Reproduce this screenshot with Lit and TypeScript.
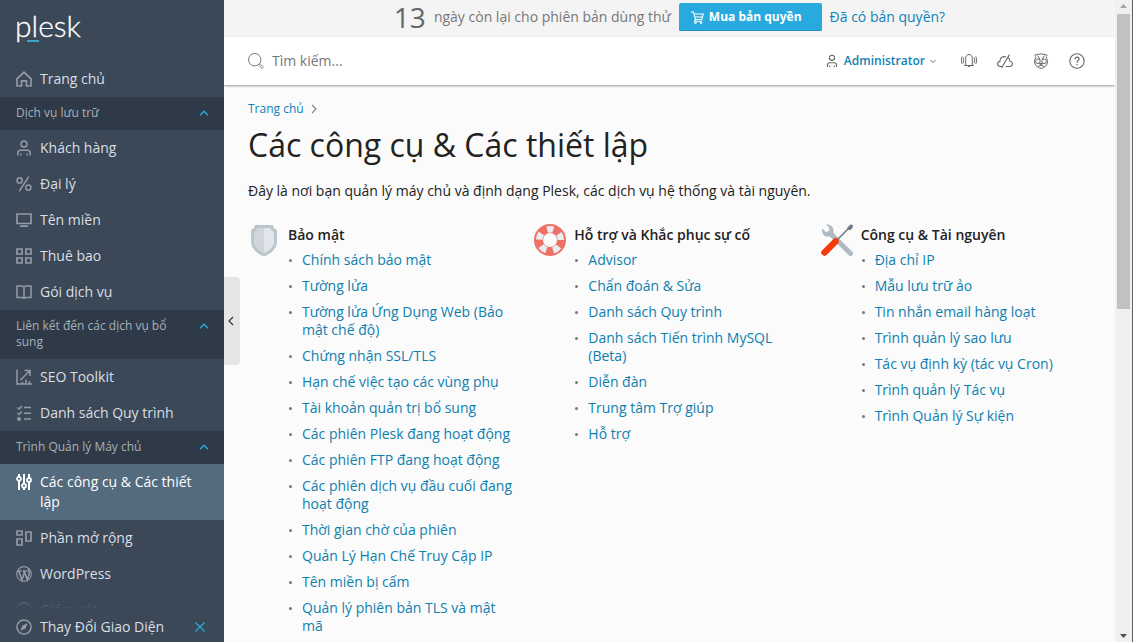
import { LitElement, html, css, svg, nothing } from "lit";
import type { TemplateResult } from "lit";
import { customElement, property } from "lit/decorators.js";
import { classMap } from "lit/directives/class-map.js";

interface NavItem { label: string; icon: string; active?: boolean; }
interface NavGroup { title?: string; items: NavItem[]; }
interface Section { title: string; icon: string; links: string[]; }

const icons: Record<string, TemplateResult> = {
  home: svg`<path d="M1 7.8 8 1.2l7 6.6V15h-4.5V9.8h-5V15H1z" stroke-width="1.7"/>`,
  user: svg`<circle cx="8" cy="4" r="3"/><path d="M1.8 15.5v-2.3c0-1.8 1.2-2.9 2.9-2.9h6.6c1.7 0 2.9 1.1 2.9 2.9v2.3"/><path d="M4.7 15.5v-2M11.3 15.5v-2"/>`,
  percent: svg`<circle cx="3.6" cy="4.4" r="2.6"/><circle cx="12.4" cy="11.6" r="2.6"/><path d="M12.8.6 3.2 15.4"/>`,
  screen: svg`<path d="M1 2h14v9.5H1zM4 14.2h8" stroke-width="1.7"/>`,
  grid: svg`<path d="M1 1h5v5H1zM10 1h5v5h-5zM1 10h5v5H1zM10 10h5v5h-5z" stroke-width="1.7"/>`,
  book: svg`<path d="M1 2h5.6L8 3l1.400-1H15v11.500H9.400L8 14.500l-1.400-1H1zM8 3v12"/>`,
  seo: svg`<path d="M1 .5V15h15M4.500 11l9-9M8.500 1.500H14V7M6.500 15v-2M10 15v-4.500M13.500 15v-3"/>`,
  tasks: svg`<path d="M1.500 2.500 3 4l3-3M1.500 8 3 9.500l3-3M8 2.500h7M8 8.200h7M8 14h7"/><circle cx="3" cy="14" r="2" fill="currentColor" stroke="none"/>`,
  tools: svg`<path d="M3 7v9M3 0v3M8 0v9.500M8 14v2M13 0v4M13 8v8" stroke-width="2"/><circle cx="3" cy="4.800" r="2" stroke-width="1.800"/><circle cx="8" cy="11.800" r="2" stroke-width="1.800"/><circle cx="13" cy="6" r="2" stroke-width="1.800"/>`,
  extensions: svg`<path d="M1 1h5v4H1zM1 9h5v6H1zM10 2h5v9h-5z" stroke-width="1.700"/>`,
  wordpress: svg`<circle cx="8" cy="8" r="7.300" stroke-width="1.200"/><path d="M1.500 5h4M6.800 5h4M2.700 5l3.200 8.800L8.300 7 7.600 5M8.200 5l3 8.800 1.900-5.600c.5-1.800-.4-2.700-.7-3.400-.4-.8.100-1.700.9-1.800" stroke-width="1.600"/>`,
  monitor: svg`<circle cx="8" cy="8" r="7"/><path d="M8 8V4"/>`,
  compass: svg`<circle cx="8" cy="8" r="7.100"/><path d="M11.700 4.300 9.500 9.500 4.300 11.700 6.500 6.500z" fill="currentColor" stroke="none"/>`,
  up: svg`<path d="M4 10.200 8 6.200l4 4" stroke-width="1.300"/>`,
  down: svg`<path d="M5.500 7 8 9.500 10.500 7" stroke-width="1"/>`,
  left: svg`<path d="M9 4 5 8l4 4" stroke-width="1.200"/>`,
  right: svg`<path d="M6 4l4 4-4 4" stroke-width="1.200"/>`,
  close: svg`<path d="m3.500 3.500 9 9M12.500 3.500l-9 9" stroke-width="1.200"/>`,
  search: svg`<circle cx="6.700" cy="6.700" r="6.200" stroke-width="1"/><path d="m11 11 1-.4 3.500 3.600-1.300 1.300-3.600-3.500z" stroke-width=".9"/>`,
  account: svg`<circle cx="8" cy="4.800" r="2.600" stroke-width="1.100"/><path d="M3.500 14v-1.800c0-1.500 1-2.400 2.400-2.400h4.200c1.400 0 2.400.9 2.400 2.400V14M5.800 14v-1.500M10.200 14v-1.500" stroke-width="1.100"/>`,
  cart: svg`<path d="M2 3h2.500l2 7.500h6.200L14.300 5H5M5.800 8h7.500M6.500 10.500l-1 1.800h7.700" stroke-width="1.100"/><circle cx="6.500" cy="13.800" r=".9" stroke-width="1"/><circle cx="12" cy="13.800" r=".9" stroke-width="1"/>`,
  bell: svg`<path d="M3.300 12.500h9.400M4.700 12.300V5.500C4.700 3 6 1.500 8 1.500s3.300 1.500 3.300 4v6.800M6.800 12.800c.2 1.200 2.200 1.200 2.400 0M2.800 4.500c-.6 1.500-.6 4 0 5.500M13.200 4.500c.6 1.500.6 4 0 5.500M1.200 3.500c-1 2-1 5.500 0 7.500M14.800 3.500c1 2 1 5.500 0 7.500" stroke-width="1"/>`,
  cloud: svg`<path d="M8.500 13.500H13c3.300-.4 3.300-5 0-5.300-.2-2-1-3.400-2.700-4M4.800 13.500H3.500C-.4 13.200-.2 8.800 3 8.300c-.2-3.600 3.400-5.600 6-4.200M12.500 1.500l-8 13.500" stroke-width="1.100"/>`,
  mascot: svg`<path d="M3 3.500C1 2.500 2 .8 4 1.800M13 3.500c2-1 1-2.700-1-1.700M4 1.800c2.500-1.200 5.500-1.200 8 0M3 4c-2 3-2.200 6.500.5 9M13 4c2 3 2.200 6.500-.5 9M3.500 13c2 3 7 3 9 0M4.500 2.500l2.500 4M11.500 2.500l-2.500 4M6.500 10.500h3L8 12.300zM5 13.500 8 12l3 1.500" stroke-width="1"/><circle cx="4.900" cy="8.300" r="2.300" stroke-width="1"/><circle cx="11.100" cy="8.300" r="2.300" stroke-width="1"/>`,
  help: svg`<circle cx="8" cy="8" r="7.200" stroke-width="1.100"/><path d="M6 6.300c0-2.900 4.100-2.700 4.100-.2C10.100 7.800 8 7.800 8 9.700M8 11v1.200" stroke-width="1.200"/>`,
};

const pictures: Record<string, TemplateResult> = {
  shield: svg`<path d="M7 1h18c.4 2.800 1.800 4.300 4 4.800V17c0 7.500-5 12-13 15.500C8 29 3 24.500 3 17V5.800C5.200 5.300 6.600 3.800 7 1z" fill="#bdc6ca"/><path d="M16 4h-6.500C9 6.300 7.800 7.600 6 8.200V17c0 5.500 3.600 9 10 12.200z" fill="#d0d7dc"/><path d="M16 4h6.500c.5 2.300 1.700 3.600 3.500 4.200V17c0 5.500-3.600 9-10 12.200z" fill="#e2e6ea"/>`,
  lifebuoy: svg`<circle cx="16" cy="16" r="11.500" fill="none" stroke="#ee7168" stroke-width="9"/><circle cx="16" cy="16" r="10.800" fill="none" stroke="#e9edef" stroke-width="6.600" stroke-dasharray="6.600 6.972" stroke-dashoffset="3.300" transform="rotate(-90 16 16)"/>`,
  tools: svg`<path d="m11 11 18.500 18.500" stroke="#b0bac0" stroke-width="5" stroke-linecap="round" fill="none"/><path d="M1 4.500 5 8l3-1 .500-3L5 .5C9 0 13 2.500 12.500 7.500L13 13l-5-.5C3.500 13.500 0 9 1 4.500z" fill="#b0bac0"/><path d="M15 17 28 4" stroke="#6d7c84" stroke-width="1.600"/><path d="m26 4 3.500-3.500 2.500.5-.5 3L28.500 6.500z" fill="#6d7c84"/><path d="m3.500 28.500 11-11" stroke="#f43b0c" stroke-width="6.500" stroke-linecap="round"/>`,
};

const icon = (name: string) => html`<svg class="icon" viewBox="0 0 16 16" fill="none" stroke="currentColor" stroke-width="1.500" aria-hidden="true">${icons[name]}</svg>`;

const iconStyles = css`
  * { box-sizing: border-box; }
  .icon { display: block; flex: none; width: 16px; height: 16px; }
  a { color: inherit; text-decoration: none; }
  button { border: 0; padding: 0; margin: 0; background: none; color: inherit; font: inherit; cursor: pointer; }
`;

@customElement("side-nav")
class SideNav extends LitElement {
  @property({ attribute: false }) groups: NavGroup[] = [];

  static styles = [iconStyles, css`
    :host { display: flex; flex-direction: column; height: 100%; background: #3a4858; color: #dbdfe3; font-size: 14px; line-height: 20px; }
    .brand { flex: none; height: 61px; padding: 7px 15px; color: #fff; font: 400 30px/36px Lato, sans-serif; font-weight: 300; -webkit-text-stroke: 0.3px #fff; }
    .name { position: relative; display: inline-block; }
    .name::after { content: ""; position: absolute; left: 12px; top: 33px; width: 12px; height: 2px; background: #3aa5c4; }
    .scroll { position: relative; flex: 1; min-height: 0; overflow: hidden; }
    .fade { position: absolute; inset: auto 0 0; height: 20px; background: linear-gradient(#3a485800, #3a4858); }
    .title { display: flex; width: 100%; justify-content: space-between; gap: 24px; padding: 8px 12px 9px 16px; background: #2e3a47; color: #a9b0b7; font-size: 12px; line-height: 16px; text-align: left; }
    .title .icon { color: #28aade; }
    .list { list-style: none; margin: 0; padding: 0; }
    .item { display: flex; gap: 8px; padding: 8px 16px; }
    .item .icon { margin-top: 2px; color: #929ba6; }
    .active { background: #546a7d; color: #fff; }
    .active .icon { color: #fff; }
    .foot { display: flex; flex: none; height: 33px; white-space: nowrap; }
    .foot .item { flex: 1; padding-right: 0; }
    .close { width: 32px; margin-right: 8px; padding: 2px 8px 0; color: #28aade; }
  `];

  render() {
    return html`
      <div class="brand"><a class="name" href="#">plesk</a></div>
      <nav class="scroll">
        ${this.groups.map((g) => html`
          ${g.title ? html`<button class="title"><span>${g.title}</span>${icon("up")}</button>` : nothing}
          <ul class="list">
            ${g.items.map((i) => html`<li><a href="#" class=${classMap({ item: true, active: !!i.active })}>${icon(i.icon)}<span>${i.label}</span></a></li>`)}
          </ul>`)}
        <div class="fade"></div>
      </nav>
      <div class="foot">
        <a class="item" href="#">${icon("compass")}<span>Thay Đổi Giao Diện</span></a>
        <button class="close" aria-label="Đóng">${icon("close")}</button>
      </div>`;
  }
}

@customElement("tool-section")
class ToolSection extends LitElement {
  @property({ attribute: false }) section!: Section;

  static styles = [iconStyles, css`
    :host { display: flex; gap: 8px; line-height: 18px; }
    .picture { flex: none; width: 32px; height: 32px; }
    .heading { margin: 2px 0 7px; font-size: 14px; font-weight: 600; color: #222; }
    .links { display: grid; gap: 8px; list-style: none; margin: 0; padding: 0; }
    .link { display: flex; color: #0f7fae; }
    .link::before { content: ""; flex: none; width: 3px; height: 3px; margin: 8px 10px 0 1px; border-radius: 50%; background: #777; }
  `];

  render() {
    return html`
      <svg class="picture" viewBox="0 0 32 32" aria-hidden="true">${pictures[this.section.icon]}</svg>
      <div>
        <h2 class="heading">${this.section.title}</h2>
        <ul class="links">${this.section.links.map((l) => html`<li class="link"><a href="#">${l}</a></li>`)}</ul>
      </div>`;
  }
}

@customElement("app-root")
class AppRoot extends LitElement {
  private groups: NavGroup[] = [
    { items: [{ label: "Trang chủ", icon: "home" }] },
    { title: "Dịch vụ lưu trữ", items: [
      { label: "Khách hàng", icon: "user" },
      { label: "Đại lý", icon: "percent" },
      { label: "Tên miền", icon: "screen" },
      { label: "Thuê bao", icon: "grid" },
      { label: "Gói dịch vụ", icon: "book" },
    ] },
    { title: "Liên kết đến các dịch vụ bổ sung", items: [
      { label: "SEO Toolkit", icon: "seo" },
      { label: "Danh sách Quy trình", icon: "tasks" },
    ] },
    { title: "Trình Quản lý Máy chủ", items: [
      { label: "Các công cụ & Các thiết lập", icon: "tools", active: true },
      { label: "Phần mở rộng", icon: "extensions" },
      { label: "WordPress", icon: "wordpress" },
      { label: "Giám sát", icon: "monitor" },
    ] },
  ];

  private sections: Section[] = [
    { title: "Bảo mật", icon: "shield", links: [
      "Chính sách bảo mật", "Tường lửa", "Tường lửa Ứng Dụng Web (Bảo mật chế độ)", "Chứng nhận SSL/TLS",
      "Hạn chế việc tạo các vùng phụ", "Tài khoản quản trị bổ sung", "Các phiên Plesk đang hoạt động",
      "Các phiên FTP đang hoạt động", "Các phiên dịch vụ đầu cuối đang hoạt động", "Thời gian chờ của phiên",
      "Quản Lý Hạn Chế Truy Cập IP", "Tên miền bị cấm", "Quản lý phiên bản TLS và mật mã",
    ] },
    { title: "Hỗ trợ và Khắc phục sự cố", icon: "lifebuoy", links: [
      "Advisor", "Chẩn đoán & Sửa", "Danh sách Quy trình", "Danh sách Tiến trình MySQL (Beta)", "Diễn đàn",
      "Trung tâm Trợ giúp", "Hỗ trợ",
    ] },
    { title: "Công cụ & Tài nguyên", icon: "tools", links: [
      "Địa chỉ IP", "Mẫu lưu trữ ảo", "Tin nhắn email hàng loạt", "Trình quản lý sao lưu",
      "Tác vụ định kỳ (tác vụ Cron)", "Trình quản lý Tác vụ", "Trình Quản lý Sự kiện",
    ] },
  ];

  static styles = [iconStyles, css`
    :host { position: relative; display: grid; grid-template-columns: 224px minmax(0, 1fr) 18px; height: 100vh; overflow: hidden; background: #fbfbfb; color: #222; font: 14px/20px "Open Sans", sans-serif; }
    side-nav { min-height: 0; }
    .page { min-height: 0; overflow: hidden; }
    .trial { display: flex; align-items: center; justify-content: center; gap: 8px; height: 37px; padding-bottom: 3px; background: #f4f4f4; color: #777; }
    .days { color: #666; font-size: 28px; line-height: 34px; }
    .buy { display: flex; align-items: center; gap: 4px; height: 28px; padding: 0 20px 0 10px; border-radius: 2px; background: #28aade; box-shadow: inset 0 -1px #1f93c4; color: #fff; font-size: 12px; font-weight: 700; }
    .owned { color: #0f83b5; }
    .bar { display: flex; align-items: center; height: 48px; padding: 0 30px 0 24px; background: #fff; box-shadow: 0 1px 2px #0006; color: #666; position: relative; }
    .search { display: flex; flex: 1; align-items: center; gap: 8px; color: #777; }
    .query { flex: 1; min-width: 0; border: 0; padding: 0; background: none; color: #222; font: inherit; outline: 0; }
    .query::placeholder { color: #777; opacity: 1; }
    .account { display: flex; align-items: center; gap: 4px; margin-right: 20px; }
    .who { color: #0f83b5; font-size: 12px; font-weight: 600; }
    .account .icon:last-child { margin-left: -4px; }
    .actions { display: flex; gap: 20px; }
    .content { padding: 16px 24px; }
    .crumbs { display: flex; align-items: center; gap: 2px; color: #888; font-size: 12px; line-height: 16px; }
    .crumbs a { color: #0f83b5; }
    .heading { margin: 8px 0 16px; font-size: 32px; font-weight: 400; line-height: 40px; }
    .intro { margin: 0 0 23px; }
    .sections { display: grid; grid-template-columns: repeat(3, minmax(0, 1fr)); gap: 16px; }
    .collapse { position: absolute; left: 224px; top: calc(50% - 44px); width: 16px; height: 88px; border-radius: 0 4px 4px 0; background: #e5e5e5; color: #333; }
    .rail { display: flex; flex-direction: column; justify-content: space-between; padding: 0 2px; border-right: 1px solid #606060; background: #f0f0f0; }
    .thumb { width: 13px; height: 46%; margin-bottom: auto; background: #c1c1c1; }
    .arrow { display: block; width: 13px; height: 14px; fill: #a3a3a3; }
    .dark { fill: #505050; }
  `];

  render() {
    return html`
      <side-nav .groups=${this.groups}></side-nav>
      <div class="page">
        <div class="trial">
          <span class="days">13</span><span>ngày còn lại cho phiên bản dùng thử</span>
          <button class="buy">${icon("cart")}<span>Mua bản quyền</span></button>
          <a class="owned" href="#">Đã có bản quyền?</a>
        </div>
        <header class="bar">
          <label class="search">${icon("search")}<input class="query" type="text" placeholder="Tìm kiếm..." aria-label="Tìm kiếm"></label>
          <button class="account">${icon("account")}<span class="who">Administrator</span>${icon("down")}</button>
          <div class="actions">
            <button aria-label="Thông báo">${icon("bell")}</button>
            <button aria-label="Đám mây">${icon("cloud")}</button>
            <button aria-label="Plesk">${icon("mascot")}</button>
            <button aria-label="Trợ giúp">${icon("help")}</button>
          </div>
        </header>
        <main class="content">
          <div class="crumbs"><a href="#">Trang chủ</a>${icon("right")}</div>
          <h1 class="heading">Các công cụ &amp; Các thiết lập</h1>
          <p class="intro">Đây là nơi bạn quản lý máy chủ và định dạng Plesk, các dịch vụ hệ thống và tài nguyên.</p>
          <div class="sections">${this.sections.map((s) => html`<tool-section .section=${s}></tool-section>`)}</div>
        </main>
      </div>
      <div class="rail" aria-hidden="true">
        <svg class="arrow" viewBox="0 0 13 14"><path d="M3 8h7L6.500 4z"/></svg>
        <div class="thumb"></div>
        <svg class="arrow dark" viewBox="0 0 13 14"><path d="M3 6h7l-3.500 4z"/></svg>
      </div>
      <button class="collapse" aria-label="Thu gọn">${icon("left")}</button>`;
  }
}
